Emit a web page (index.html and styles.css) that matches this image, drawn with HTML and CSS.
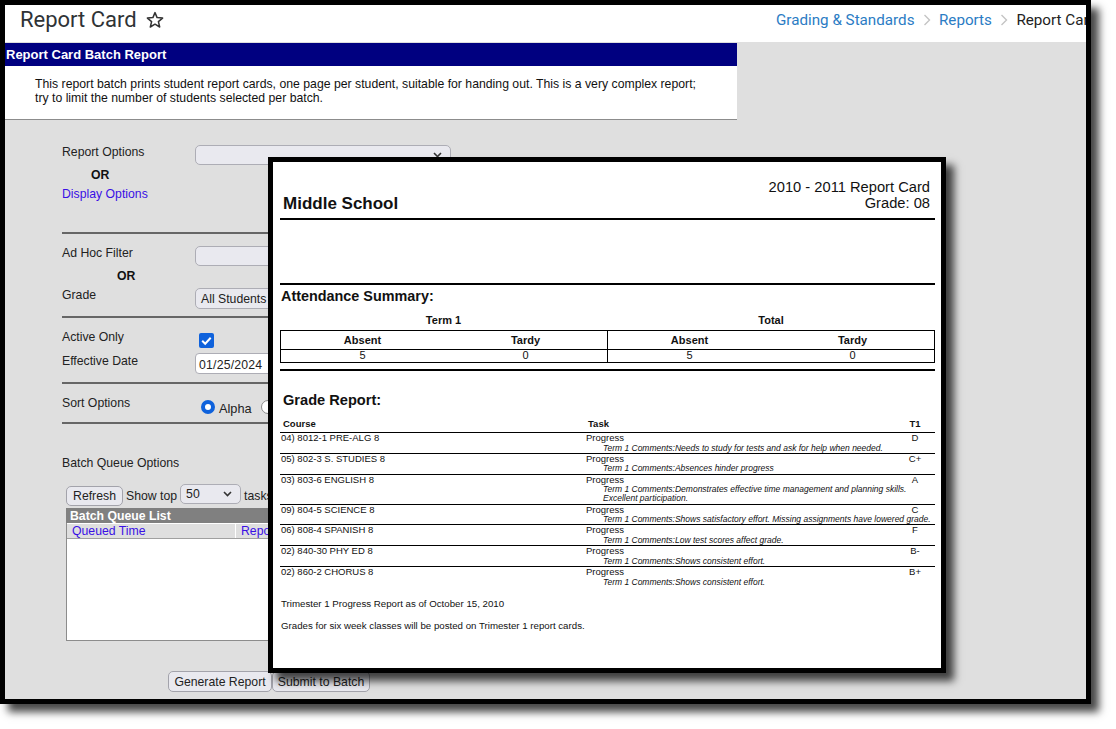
FILE: index.html
```html
<!DOCTYPE html>
<html lang="en">
<head>
<meta charset="utf-8">
<title>Report Card</title>
<link rel="stylesheet" href="styles.css">
</head>
<body>
<div class="frame">
  <header class="top">
    <div class="title-wrap">
      <h1 class="title">Report Card</h1>
      <svg class="star" width="18" height="18" viewBox="0 0 18 18"><polygon points="9,1.6 11.1,6.6 16.6,7.1 12.4,10.6 13.7,16 9,13.2 4.3,16 5.6,10.6 1.4,7.1 6.9,6.6" fill="none" stroke="#333" stroke-width="1.5" stroke-linejoin="round"/></svg>
    </div>
    <nav class="crumbs">
      <a class="crumb-link">Grading &amp; Standards</a>
      <svg class="chev" width="8" height="12" viewBox="0 0 8 12"><path d="M1.5 1l5 5-5 5" fill="none" stroke="#c4c4c4" stroke-width="1.4"/></svg>
      <a class="crumb-link">Reports</a>
      <svg class="chev" width="8" height="12" viewBox="0 0 8 12"><path d="M1.5 1l5 5-5 5" fill="none" stroke="#c4c4c4" stroke-width="1.4"/></svg>
      <span class="crumb-current">Report Card</span>
    </nav>
  </header>

  <section class="intro">
    <h2 class="intro-head">Report Card Batch Report</h2>
    <p class="intro-text">This report batch prints student report cards, one page per student, suitable for handing out. This is a very complex report; try to limit the number of students selected per batch.</p>
  </section>

  <form class="form">
    <div class="row row-first">
      <span class="label">Report Options</span>
      <div class="select select-wide"><span></span><svg width="9" height="6" viewBox="0 0 9 6"><path d="M1 1l3.5 3.5L8 1" fill="none" stroke="#333" stroke-width="1.6"/></svg></div>
    </div>
    <div class="or or-a">OR</div>
    <a class="link-option">Display Options</a>
    <hr class="rule rule-a">

    <div class="row row-adhoc">
      <span class="label">Ad Hoc Filter</span>
      <div class="select select-wide"><span></span></div>
    </div>
    <div class="or or-b">OR</div>
    <div class="row row-grade">
      <span class="label">Grade</span>
      <div class="select select-wide select-tall"><span>All Students</span></div>
    </div>
    <hr class="rule rule-b">

    <div class="row row-active">
      <span class="label">Active Only</span>
      <span class="checkbox"><svg width="15" height="15" viewBox="0 0 15 15"><path d="M3.2 7.8l3 3 5.5-6" fill="none" stroke="#fff" stroke-width="2"/></svg></span>
    </div>
    <div class="row row-date">
      <span class="label label-date">Effective Date</span>
      <div class="date-input">01/25/2024</div>
    </div>
    <hr class="rule rule-c">

    <div class="row row-sort">
      <span class="label">Sort Options</span>
      <div class="radios">
        <span class="radio radio-on"></span><span class="radio-text">Alpha</span>
        <span class="radio"></span>
      </div>
    </div>
    <hr class="rule rule-c">

    <div class="label queue-label">Batch Queue Options</div>
    <div class="queue-tools">
      <button type="button" class="btn btn-refresh">Refresh</button>
      <span class="tool-text">Show top</span>
      <div class="select select-top"><span>50</span><svg width="9" height="6" viewBox="0 0 9 6"><path d="M1 1l3.5 3.5L8 1" fill="none" stroke="#333" stroke-width="1.6"/></svg></div>
      <span class="tool-text">tasks</span>
    </div>
    <div class="queue-list">
      <div class="queue-head">Batch Queue List</div>
      <div class="queue-cols">
        <span class="queue-col queue-col-time">Queued Time</span>
        <span class="queue-col">Report</span>
      </div>
    </div>
    <div class="actions">
      <button type="button" class="btn btn-gen">Generate Report</button>
      <button type="button" class="btn btn-sub">Submit to Batch</button>
    </div>
  </form>

  <article class="sheet">
    <div class="sheet-head">
      <div class="school">Middle School</div>
      <div class="sheet-meta">2010 - 2011 Report Card<br>Grade: 08</div>
    </div>
    <div class="bar bar-a"></div>
    <div class="bar bar-b"></div>
    <h3 class="att-title">Attendance Summary:</h3>
    <div class="terms"><span>Term 1</span><span>Total</span></div>
    <div class="att-table">
      <div class="att-half">
        <div class="att-cell att-h">Absent</div><div class="att-cell att-h">Tardy</div>
        <div class="att-cell att-v">5</div><div class="att-cell att-v">0</div>
      </div>
      <div class="att-half att-half-r">
        <div class="att-cell att-h">Absent</div><div class="att-cell att-h">Tardy</div>
        <div class="att-cell att-v">5</div><div class="att-cell att-v">0</div>
      </div>
    </div>
    <div class="bar bar-c"></div>
    <h3 class="grade-title">Grade Report:</h3>
    <div class="g-head"><span class="g-h-course">Course</span><span class="g-h-task">Task</span><span class="g-h-t1">T1</span></div>
    <div class="g-row"><span class="g-course">04) 8012-1 PRE-ALG 8</span><span>Progress</span><span class="g-mark">D</span><span class="g-note">Term 1 Comments:Needs to study for tests and ask for help when needed.</span></div>
    <div class="g-row"><span class="g-course">05) 802-3 S. STUDIES 8</span><span>Progress</span><span class="g-mark">C+</span><span class="g-note">Term 1 Comments:Absences hinder progress</span></div>
    <div class="g-row"><span class="g-course">03) 803-6 ENGLISH 8</span><span>Progress</span><span class="g-mark">A</span><span class="g-note">Term 1 Comments:Demonstrates effective time management and planning skills.<br>Excellent participation.</span></div>
    <div class="g-row"><span class="g-course">09) 804-5 SCIENCE 8</span><span>Progress</span><span class="g-mark">C</span><span class="g-note">Term 1 Comments:Shows satisfactory effort. Missing assignments have lowered grade.</span></div>
    <div class="g-row"><span class="g-course">06) 808-4 SPANISH 8</span><span>Progress</span><span class="g-mark">F</span><span class="g-note">Term 1 Comments:Low test scores affect grade.</span></div>
    <div class="g-row"><span class="g-course">02) 840-30 PHY ED 8</span><span>Progress</span><span class="g-mark">B-</span><span class="g-note">Term 1 Comments:Shows consistent effort.</span></div>
    <div class="g-row"><span class="g-course">02) 860-2 CHORUS 8</span><span>Progress</span><span class="g-mark">B+</span><span class="g-note">Term 1 Comments:Shows consistent effort.</span></div>
    <p class="foot foot-a">Trimester 1 Progress Report as of October 15, 2010</p>
    <p class="foot foot-b">Grades for six week classes will be posted on Trimester 1 report cards.</p>
  </article>
</div>
</body>
</html>
```

FILE: styles.css
```css
* { box-sizing: border-box; }
html, body { margin: 0; padding: 0; background: #fff; }
body { font-family: "Liberation Sans", Arial, sans-serif; color: #111; height: 729px; overflow: hidden; }

.frame {
  position: relative;
  width: 1091px;
  height: 704px;
  border: 5px solid #000;
  background: #dfdfdf;
  overflow: hidden;
  box-shadow: 8px 8px 8px rgba(0, 0, 0, .72);
}

.top {
  display: grid;
  grid-template-columns: 771px 1fr;
  height: 37px;
  padding-bottom: 7px;
  background: #fff;
  align-items: center;
}
.title-wrap { display: flex; align-items: center; padding-left: 15px; }
.title { margin: 0; font: 400 22px/28px Roboto, sans-serif; color: #2f3336; }
.star { margin-left: 9px; flex: none; }
.crumbs { display: flex; align-items: center; white-space: nowrap; overflow: hidden; font: 400 15.2px/20px Roboto, sans-serif; }
.crumb-link { color: #2b7cc4; flex: none; }
.crumb-current { color: #222; flex: none; }
.chev { margin: 0 8px 0 8.5px; flex: none; }

.intro { width: 732px; height: 77px; margin-top: 1px; background: #fff; border-bottom: 1px solid #8c8c8c; }
.intro-head { margin: 0; height: 23px; background: #000080; color: #fff; font: 700 13px/23px "Liberation Sans", sans-serif; padding-left: 1px; }
.intro-text { margin: 0; padding: 11px 36px 0 30px; font-size: 12.25px; line-height: 14px; color: #111; }

.form { display: flex; flex-direction: column; padding-left: 57px; font-size: 12.25px; line-height: 14px; }
.row { display: flex; align-items: flex-start; }
.label { display: block; width: 133px; flex: none; color: #222; }
.row-first { margin-top: 25px; }
.select { display: flex; align-items: center; justify-content: space-between; height: 20px; background: #e9e9ef; border: 1px solid #adadb5; border-radius: 5px; padding: 0 8px 0 5px; color: #222; flex: none; }
.select-wide { width: 256px; }
.select-tall { height: 21px; }
.or { font-weight: 700; color: #111; }
.or-a { margin-top: 3px; padding-left: 29px; }
.or-b { margin-top: 3px; padding-left: 55px; }
.link-option { margin-top: 5px; color: #3a10e5; }
.rule { width: 400px; height: 2px; margin: 8px 0 0; border: 0; background: #666; }
.rule-a { margin-top: 31px; }
.rule-b { margin-top: 7px; }
.row-adhoc { margin-top: 12px; }
.row-grade { margin-top: 5px; }
.row-active { margin-top: 12px; height: 18px; }
.checkbox { display: block; width: 15px; height: 15px; margin: 3px 0 0 4px; background: #0f62dc; border-radius: 2px; }
.checkbox svg { display: block; }
.row-date { margin-top: 5px; }
.label-date { margin-top: 1px; }
.date-input { width: 256px; height: 21px; padding: 3px 3px 0 3px; background: #fff; border: 1px solid #adadb5; border-radius: 4px; font-size: 12.25px; line-height: 16px; flex: none; color: #222; letter-spacing: .2px; }
.row-sort { margin-top: 12px; height: 18px; }
.radios { display: flex; align-items: center; margin: 4px 0 0 6px; height: 14px; }
.radio { display: block; width: 14px; height: 14px; border: 1px solid #8a8a8a; border-radius: 50%; background: #fff; flex: none; }
.radio-on { border: 4px solid #0f62dc; }
.radio-text { margin: 3px 9px 0 4px; line-height: 14px; color: #222; font-size: 12.75px; }
.queue-label { width: auto; margin-top: 32px; }
.queue-tools { display: flex; align-items: flex-start; margin: 14px 0 0 4px; height: 22px; }
.btn { font: 12.25px/14px "Liberation Sans", sans-serif; height: 20px; padding: 0; background: #e9e9ef; border: 1px solid #a3a3ab; border-radius: 5px; color: #222; }
.btn-refresh { width: 57px; margin-top: 2px; }
.tool-text { margin: 5px 3px 0; color: #222; white-space: nowrap; }
.select-top { width: 61px; height: 20px; }
.queue-list { width: 420px; height: 133px; margin: 2px 0 0 4px; background: #fff; border: 1px solid #8c8c8c; border-top: 0; flex: none; }
.queue-head { height: 15px; margin: 0 -1px; padding-left: 4px; background: #808080; color: #fff; font-weight: 700; line-height: 16px; }
.queue-cols { display: grid; grid-template-columns: 169px 1fr; height: 16px; background: #dfdfdf; border-bottom: 1px solid #a0a0a0; border-top: 1px solid #fff; }
.queue-col { color: #3a10e5; padding-left: 5px; line-height: 14px; }
.queue-col-time { border-right: 1px solid #fff; }
.actions { display: flex; margin: 30px 0 0 106px; }
.btn-gen { width: 104px; height: 21px; }
.btn-sub { width: 98px; height: 21px; }

.sheet {
  position: absolute;
  left: 263px;
  top: 152px;
  width: 678px;
  height: 516px;
  padding: 17px 6px 0 7px;
  background: #fff;
  border: 5px solid #000;
  box-shadow: 8px 8px 8px rgba(0, 0, 0, .72);
  color: #111;
}
.sheet-head { display: flex; justify-content: space-between; align-items: flex-end; height: 32px; padding: 0 5px 0 3px; }
.school { font-size: 17px; line-height: 18px; font-weight: 700; margin-bottom: -2px; }
.sheet-meta { font-size: 14.7px; line-height: 16px; text-align: right; }
.bar { height: 2px; background: #000; }
.bar-a { margin-top: 7px; }
.bar-b { margin-top: 63px; }
.bar-c { margin-top: 6px; }
.att-title { margin: 3px 0 0 1px; font-size: 14.4px; line-height: 16px; font-weight: 700; }
.terms { display: grid; grid-template-columns: 327px 328px; margin-top: 9px; height: 17px; font-size: 11px; line-height: 14px; font-weight: 700; text-align: center; }
.att-table { display: grid; grid-template-columns: 326px 327px; height: 33px; border: 1px solid #000; }
.att-half { display: grid; grid-template-columns: 1fr 1fr; grid-template-rows: 19px 13px; }
.att-half-r { border-left: 1px solid #000; }
.att-cell { text-align: center; font-size: 11px; }
.att-h { font-weight: 700; line-height: 19px; border-bottom: 1px solid #000; }
.att-v { line-height: 11px; }
.grade-title { margin: 20px 0 0 3px; font-size: 14.6px; line-height: 18px; font-weight: 700; }
.g-head, .g-row { display: grid; grid-template-columns: 306px 1fr 40px; font-size: 9.5px; }
.g-head { margin-top: 9px; height: 15px; border-bottom: 1px solid #000; font-weight: 700; line-height: 12px; }
.g-h-course { padding-left: 3px; }
.g-h-task { padding-left: 2px; }
.g-h-t1, .g-mark { text-align: center; }
.g-row { border-bottom: 1px solid #000; line-height: 10.5px; }
.g-row:last-of-type { border-bottom: 0; }
.g-course { grid-row: 1 / span 2; padding-left: 1px; }
.g-note { grid-column: 2 / 4; padding-left: 17px; font-style: italic; font-size: 8.5px; line-height: 9.3px; white-space: nowrap; }
.foot { margin: 0; padding-left: 1px; font-size: 9.7px; line-height: 10px; }
.foot-a { margin-top: 12px; }
.foot-b { margin-top: 12px; }
```
